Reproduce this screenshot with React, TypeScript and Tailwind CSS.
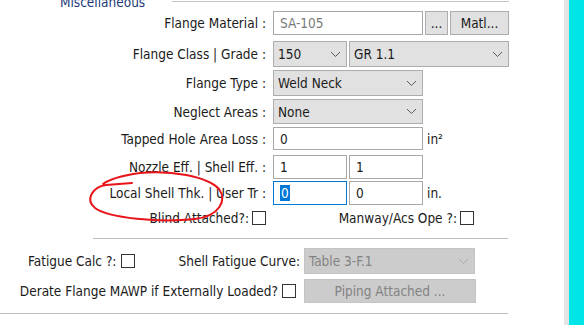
import * as React from 'react'

const font = { fontFamily: '"DejaVu Sans Condensed", "DejaVu Sans", Tahoma, sans-serif' }

const Chevron = ({ disabled = false }: { disabled?: boolean }) => (
    <svg width="11" height="7" viewBox="0 0 11 7" className="shrink-0">
        <path d="M1 1 L5.5 5.5 L10 1" fill="none" stroke={disabled ? '#a9a9a9' : '#5a5a5a'} strokeWidth="1" />
    </svg>
)

const Combo = ({ value, w, h = 'h-[26px]' }: { value: string; w: string; h?: string }) => (
    <div className={`${w} ${h} flex items-center justify-between border border-[#adadad] bg-[#e1e1e1] pl-[4px] pr-[5px] text-[#1b1b1b]`}>
        <span>{value}</span>
        <Chevron />
    </div>
)

const TextBox = ({ value, w, gray = false }: { value: string; w: string; gray?: boolean }) => (
    <div className={`${w} h-full flex items-center border border-[#a8a8a8] bg-white pl-[6px] ${gray ? 'text-[#7a7a7a]' : 'text-[#1b1b1b]'}`}>
        {value}
    </div>
)

const Check = () => <div className="w-[14px] h-[14px] border border-[#333] bg-white shrink-0" />

const Row = ({ label, mt, h, children }: { label: string; mt: string; h: string; children: React.ReactNode }) => (
    <div className={`flex items-center ${mt} ${h}`}>
        <div className="w-[266px] text-right whitespace-nowrap">{label}</div>
        <div className="ml-[7px] flex items-center h-full">{children}</div>
    </div>
)

export default function App() {
    return (
        <div className="w-[584px] h-[325px] flex overflow-hidden bg-white text-[13.5px] leading-[16px] text-[#1b1b1b]" style={font}>
            <div className="w-[564px] relative flex flex-col">
                {/* group header */}
                <div className="flex items-center h-[16px] -mt-[6px]">
                    <span className="ml-[60px] text-[#1c3a78]">Miscellaneous</span>
                    <div className="ml-auto mr-[55px] w-[337px] h-[2px] border-t border-[#c4c4c4]" />
                </div>

                <Row label="Flange Material :" mt="mt-[1px]" h="h-[24px]">
                    <TextBox value="SA-105" w="w-[150px]" gray />
                    <div className="ml-[2px] w-[23px] h-full flex items-center justify-center border border-[#adadad] bg-[#e1e1e1]">...</div>
                    <div className="ml-[2px] w-[59px] h-full flex items-center justify-center border border-[#adadad] bg-[#e1e1e1]">Matl...</div>
                </Row>

                <Row label="Flange Class | Grade :" mt="mt-[6px]" h="h-[26px]">
                    <Combo value="150" w="w-[74px]" />
                    <div className="ml-[2px]">
                        <Combo value="GR 1.1" w="w-[160px]" />
                    </div>
                </Row>

                <Row label="Flange Type :" mt="mt-[3px]" h="h-[26px]">
                    <Combo value="Weld Neck" w="w-[150px]" />
                </Row>

                <Row label="Neglect Areas :" mt="mt-[3px]" h="h-[25px]">
                    <Combo value="None" w="w-[150px]" h="h-[25px]" />
                </Row>

                <Row label="Tapped Hole Area Loss :" mt="mt-[3px]" h="h-[23px]">
                    <TextBox value="0" w="w-[150px]" />
                    <span className="ml-[4px]">in²</span>
                </Row>

                <Row label="Nozzle Eff. | Shell Eff. :" mt="mt-[5px]" h="h-[24px]">
                    <TextBox value="1" w="w-[74px]" />
                    <div className="ml-[2px] h-full">
                        <TextBox value="1" w="w-[74px]" />
                    </div>
                </Row>

                <Row label="Local Shell Thk. | User Tr :" mt="mt-[2px]" h="h-[24px]">
                    <div className="w-[74px] h-full flex items-center border border-[#0078d7] bg-white pl-[6px]">
                        <span className="bg-[#0078d7] text-white px-[1px] leading-[16px]">0</span>
                    </div>
                    <div className="ml-[2px] h-full">
                        <TextBox value="0" w="w-[74px]" />
                    </div>
                    <span className="ml-[4px]">in.</span>
                </Row>

                <div className="flex items-center mt-[4px] h-[18px]">
                    <div className="w-[266px] flex items-center justify-end">
                        <span className="mr-[3px]">Blind Attached?:</span>
                        <Check />
                    </div>
                    <div className="w-[208px] flex items-center justify-end">
                        <span className="mr-[3px]">Manway/Acs Ope ?:</span>
                        <Check />
                    </div>
                </div>

                <div className="mt-[11px] ml-[93px] w-[415px] h-[2px] border-t border-[#bdbdbd]" />

                <div className="flex items-center mt-[8px] h-[26px]">
                    <div className="w-[304px] flex items-center">
                        <span className="ml-[28px]">Fatigue Calc ?:</span>
                        <div className="ml-[5px]"><Check /></div>
                        <span className="ml-auto mr-[4px]">Shell Fatigue Curve:</span>
                    </div>
                    <div className="w-[171px] h-full flex items-center justify-between border border-[#c4c4c4] bg-[#cccccc] pl-[4px] pr-[5px] text-[#838383]">
                        <span>Table 3-F.1</span>
                        <Chevron disabled />
                    </div>
                </div>

                <div className="flex items-center mt-[5px] h-[24px]">
                    <div className="w-[304px] flex items-center justify-end pr-[8px]">
                        <span className="mr-[4px] whitespace-nowrap">Derate Flange MAWP if Externally Loaded?</span>
                        <Check />
                    </div>
                    <div className="w-[172px] h-full flex items-center justify-center border border-[#c4c4c4] bg-[#cccccc] text-[#838383]">
                        Piping Attached ...
                    </div>
                </div>

                <div className="mt-[10px] w-[508px] h-[2px] border-t border-[#bdbdbd]" />

                {/* hand-drawn annotation */}
                <svg className="absolute left-0 top-0 pointer-events-none" width="564" height="325">
                    <path
                        d="M132 183 L106 185 C92 187 85 200 95 208 C108 218 160 223 195 219 C220 216 227 200 219 189 C207 176 170 170 140 173 C120 176 108 180 103 184"
                        fill="none"
                        stroke="#e8141a"
                        strokeWidth="2"
                        strokeLinecap="round"
                    />
                </svg>
            </div>
            <div className="w-[5px] bg-[#e4e4e4]" />
            <div className="flex-1 bg-[#00e6e8]" />
        </div>
    )
}
